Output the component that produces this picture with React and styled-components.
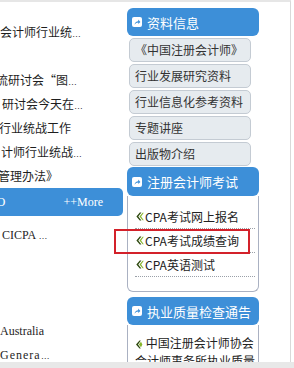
import React from "react";
import styled, { createGlobalStyle } from "styled-components";

const GlobalStyle = createGlobalStyle`
  html, body {
    margin: 0;
    padding: 0;
    background: #fff;
  }
  body {
    font-family: "Noto Sans CJK SC", "Noto Sans", sans-serif;
    color: #1e1e1e;
  }
`;

const Screen = styled.div`
  width: 294px;
  height: 368px;
  overflow: hidden;
  display: flex;
  flex-direction: column;
  background: #fff;
`;

const Frame = styled.div`
  width: 291px;
  height: 362px;
  box-sizing: border-box;
  border-top: 2px solid #e6e6e6;
  border-right: 1px solid #d9d9d9;
  display: grid;
  grid-template-columns: 127px 132px;
  align-items: start;
  overflow: hidden;
`;

const BottomBand = styled.div`
  height: 6px;
  background: #e8e8e8;
`;

/* left column: news list clipped by the page edge */
const LeftCol = styled.div`
  padding: 18px 4px 0 0;
  overflow: hidden;
`;

const Line = styled.div`
  height: 24px;
  line-height: 24px;
  font-size: 12px;
  white-space: nowrap;
  text-indent: ${(p) => p.$indent || 0}px;
  letter-spacing: ${(p) => p.$spacing || 0}px;
  font-family: ${(p) =>
    p.$serif ? '"Liberation Serif", "DejaVu Serif", serif' : "inherit"};
`;

const Dots = styled.span`
  font-family: "Liberation Sans", sans-serif;
  font-size: 9px;
  letter-spacing: 0;
  color: #333;
`;

const MoreBar = styled.div`
  height: 28px;
  margin-bottom: 7px;
  border-radius: 0 5px 5px 0;
  background: #3d8fd8;
  color: #fff;
  display: flex;
  align-items: center;
  justify-content: space-between;
  padding-right: 20px;
  font-family: "Liberation Serif", "DejaVu Serif", serif;
  font-size: 12px;
  overflow: hidden;
`;

const BarCut = styled.span`
  margin-left: -4px;
  font-size: 13px;
`;

/* right column: side boxes */
const RightCol = styled.div`
  padding-top: 6px;
  display: flex;
  flex-direction: column;
`;

const Header = styled.div`
  height: ${(p) => p.$h || 28}px;
  box-sizing: border-box;
  background: #3d8fd8;
  border-radius: 6px;
  color: #fff;
  font-size: 13px;
  display: flex;
  align-items: center;
  gap: 5px;
  padding-left: 5px;
  margin-top: ${(p) => p.$mt || 0}px;
`;

const ButtonList = styled.div`
  display: flex;
  flex-direction: column;
  gap: 2px;
  padding: 2px 8px 1px 2px;
`;

const LinkButton = styled.div`
  height: 24px;
  box-sizing: border-box;
  border: 1px solid #c4cbd3;
  border-radius: 5px;
  background: #e6ebef;
  color: #333;
  font-size: 12px;
  line-height: 22px;
  padding-left: 5px;
  white-space: nowrap;
`;

const Panel = styled.div`
  border: 1px solid #aab1c2;
  border-top: none;
  border-radius: 0 0 6px 6px;
  padding: ${(p) => p.$pad};
`;

const Item = styled.div`
  position: relative;
  height: 24px;
  margin: 0 3px 0 7px;
  padding-left: 1px;
  border-bottom: 1px dotted #9aa0a8;
  box-sizing: border-box;
  display: flex;
  align-items: center;
  gap: 1px;
  font-size: 12px;
  color: #222;
  white-space: nowrap;
`;

const Highlight = styled.div`
  position: absolute;
  left: -21px;
  right: 5px;
  top: 0;
  height: 25px;
  box-sizing: border-box;
  border: 2px solid #d3212a;
`;

const Notice = styled.p`
  margin: 0 3px 0 7px;
  font-size: 12px;
  line-height: 18px;
  color: #222;
`;

const LinkIcon = () => (
  <svg width="10" height="10" viewBox="0 0 10 10">
    <rect x="0" y="0" width="10" height="10" rx="2" fill="#fff" />
    <path
      d="M2.6 7.8 C2.8 5.4 4.3 4.3 6.2 4.2 L6.2 2.6 L8.4 4.9 L6.2 7.1 L6.2 5.6 C4.8 5.6 3.6 6.3 2.6 7.8 Z"
      fill="#3d8fd8"
    />
  </svg>
);

const Chevrons = () => (
  <svg width="8" height="9" viewBox="0 0 8 9">
    <path d="M3.8 0.5 L0.4 4.5 L3.8 8.5 L5.4 8.5 L2.3 4.5 L5.4 0.5 Z" fill="#2f4a10" />
    <path d="M6.6 0.8 L3.5 4.5 L6.6 8.2 L7.8 8.2 L5.1 4.5 L7.8 0.8 Z" fill="#86b52c" />
  </svg>
);

const Diamond = () => (
  <svg width="8" height="9" viewBox="0 0 8 9" style={{ verticalAlign: "-1px" }}>
    <path d="M4.5 0.5 L1 4.5 L4.5 8.5 L5.8 8.5 L3 4.5 L5.8 0.5 Z" fill="#2f4a10" />
    <path d="M6 1.8 L3.8 4.5 L6 7.2 L7.4 4.5 Z" fill="#86b52c" />
  </svg>
);

const newsLines = [
  { text: "会计师行业统", dots: true, indent: 0 },
  { text: "" },
  { text: "流研讨会“图", dots: true, indent: -4 },
  { text: "研讨会今天在", dots: true, indent: 2 },
  { text: "行业统战工作", indent: -1 },
  { text: "计师行业统战", dots: true, indent: 1 },
  { text: "管理办法》", indent: -2 },
];

const englishLines = [
  { text: "CICPA ", dots: true, indent: 2 },
  { text: "" },
  { text: "" },
  { text: "" },
  { text: "Australia", indent: 0 },
  { text: "Genera", dots: true, indent: 0, spacing: 1 },
];

const materials = [
  "《中国注册会计师》",
  "行业发展研究资料",
  "行业信息化参考资料",
  "专题讲座",
  "出版物介绍",
];

const examLinks = ["CPA考试网上报名", "CPA考试成绩查询", "CPA英语测试"];

export default function App() {
  return (
    <>
      <GlobalStyle />
      <Screen>
        <Frame>
          <LeftCol>
            {newsLines.map((l, i) => (
              <Line key={"n" + i} $indent={l.indent}>
                {l.text}
                {l.dots && <Dots>…</Dots>}
              </Line>
            ))}
            <MoreBar>
              <BarCut>O</BarCut>
              <span>++More</span>
            </MoreBar>
            {englishLines.map((l, i) => (
              <Line key={"e" + i} $serif $indent={l.indent} $spacing={l.spacing}>
                {l.text}
                {l.dots && <Dots>…</Dots>}
              </Line>
            ))}
          </LeftCol>

          <RightCol>
            <Header>
              <LinkIcon />
              资料信息
            </Header>
            <ButtonList>
              {materials.map((m) => (
                <LinkButton key={m}>{m}</LinkButton>
              ))}
            </ButtonList>

            <Header $h={29}>
              <LinkIcon />
              注册会计师考试
            </Header>
            <Panel $pad="9px 0 14px">
              {examLinks.map((t, i) => (
                <Item key={t}>
                  <Chevrons />
                  {t}
                  {i === 1 && <Highlight />}
                </Item>
              ))}
            </Panel>

            <Header $mt={5}>
              <LinkIcon />
              执业质量检查通告
            </Header>
            <Panel $pad="9px 0 10px">
              <Notice>
                <Diamond /> 中国注册会计师协会会计师事务所执业质量检查通告
              </Notice>
            </Panel>
          </RightCol>
        </Frame>
        <BottomBand />
      </Screen>
    </>
  );
}
